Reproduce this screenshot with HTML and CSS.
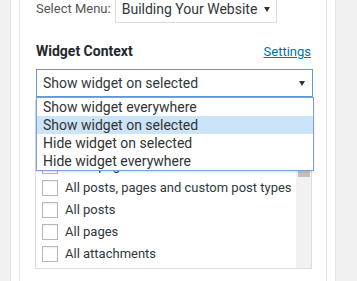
FILE: index.html
```html
<!DOCTYPE html>
<html lang="en">
<head>
  <meta charset="UTF-8" />
  <title>Widget Context</title>
  <link rel="stylesheet" href="styles.css">
</head>
<body>
  <div class="widget">
    <div class="widget-inside">
      <div class="menu-row">
        <span class="menu-label">Select Menu:</span>
        <div class="menu-select">
          <span>Building Your Website</span>
          <span class="arrow"></span>
        </div>
      </div>

      <div class="context-head">
        <h3>Widget Context</h3>
        <a href="#">Settings</a>
      </div>

      <div class="context-select">
        <div class="select-box">
          <span>Show widget on selected</span>
          <span class="arrow"></span>
        </div>
        <ul class="dropdown">
          <li>Show widget everywhere</li>
          <li class="active">Show widget on selected</li>
          <li>Hide widget on selected</li>
          <li>Hide widget everywhere</li>
        </ul>
      </div>

      <div class="check-box-list">
        <ul class="checks">
          <li><span class="check"></span>Front page</li>
          <li><span class="check"></span>All posts, pages and custom post types</li>
          <li><span class="check"></span>All posts</li>
          <li><span class="check"></span>All pages</li>
          <li><span class="check"></span>All attachments</li>
        </ul>
        <div class="scroll-track">
          <div class="scroll-thumb"></div>
        </div>
      </div>
    </div>
  </div>
</body>
</html>
```

FILE: styles.css
```css
body {
  margin: 0;
  background-color: #f1f1f1;
  font-family: Roboto, 'Liberation Sans', sans-serif;
  color: #32373c;
  overflow: hidden;
}

.widget {
  width: 326px;
  box-sizing: border-box;
  margin: -20px 0 0 10px;
  padding: 0 8px;
  background-color: #fff;
  border: 1px solid #e5e5e5;
}

.widget-inside {
  height: 320px;
  padding: 14px 13px 0 16px;
  border: 1px solid #e8e8e8;
  border-top: none;
}

.menu-row {
  display: flex;
  align-items: center;
  gap: 4px;
}

.menu-label {
  font-size: 13px;
  line-height: 18px;
  color: #555;
}

.menu-select {
  width: 162px;
  height: 28px;
  box-sizing: border-box;
  display: flex;
  align-items: center;
  justify-content: space-between;
  padding: 0 6px 0 6px;
  border: 1px solid #ddd;
  font-size: 14px;
  line-height: 18px;
  color: #32373c;
}

.arrow {
  width: 0;
  height: 0;
  border-left: 3px solid transparent;
  border-right: 3px solid transparent;
  border-top: 5px solid #333;
}

.context-head {
  display: flex;
  justify-content: space-between;
  align-items: baseline;
  margin-top: 19px;
  line-height: 18px;
}

.context-head h3 {
  margin: 0;
  font-size: 14px;
  font-weight: bold;
  color: #23282d;
}

.context-head a {
  margin-right: 2px;
  font-size: 13px;
  color: #0073aa;
  text-decoration: underline;
}

.context-select {
  position: relative;
  margin-top: 8px;
}

.select-box {
  height: 28px;
  box-sizing: border-box;
  display: flex;
  align-items: center;
  justify-content: space-between;
  padding: 0 7px 0 6px;
  border: 1px solid #5b9dd9;
  font-size: 14px;
  line-height: 18px;
  color: #32373c;
}

.dropdown {
  position: absolute;
  top: 100%;
  left: 0;
  right: -1px;
  z-index: 2;
  margin: 0;
  padding: 0;
  list-style: none;
  background-color: #fff;
  border: 1px solid #7f9fd8;
  box-shadow: 0 1px 2px rgba(0,0,0,0.12);
}

.dropdown li {
  height: 18px;
  padding-left: 6px;
  font-size: 14px;
  line-height: 18px;
  color: #333;
}

.dropdown li.active {
  background-color: #cce4f7;
}

.check-box-list {
  display: flex;
  height: 169px;
  box-sizing: border-box;
  margin: 3px 1px 0 -1px;
  border: 1px solid #ddd;
  overflow: hidden;
}

.checks {
  flex: 1;
  margin: 0;
  padding: 54px 0 0 6px;
  list-style: none;
}

.checks li {
  display: flex;
  align-items: center;
  height: 22px;
  font-size: 13px;
  line-height: 22px;
  color: #32373c;
  white-space: nowrap;
}

.check {
  width: 16px;
  height: 16px;
  box-sizing: border-box;
  margin-right: 7px;
  border: 1px solid #b4b9be;
  background-color: #fff;
  box-shadow: inset 0 1px 2px rgba(0,0,0,0.07);
}

.scroll-track {
  width: 15px;
  box-sizing: border-box;
  padding: 2px 1px 0 2px;
  background-color: #f1f1f1;
}

.scroll-thumb {
  height: 74px;
  background-color: #c1c1c1;
}
```
